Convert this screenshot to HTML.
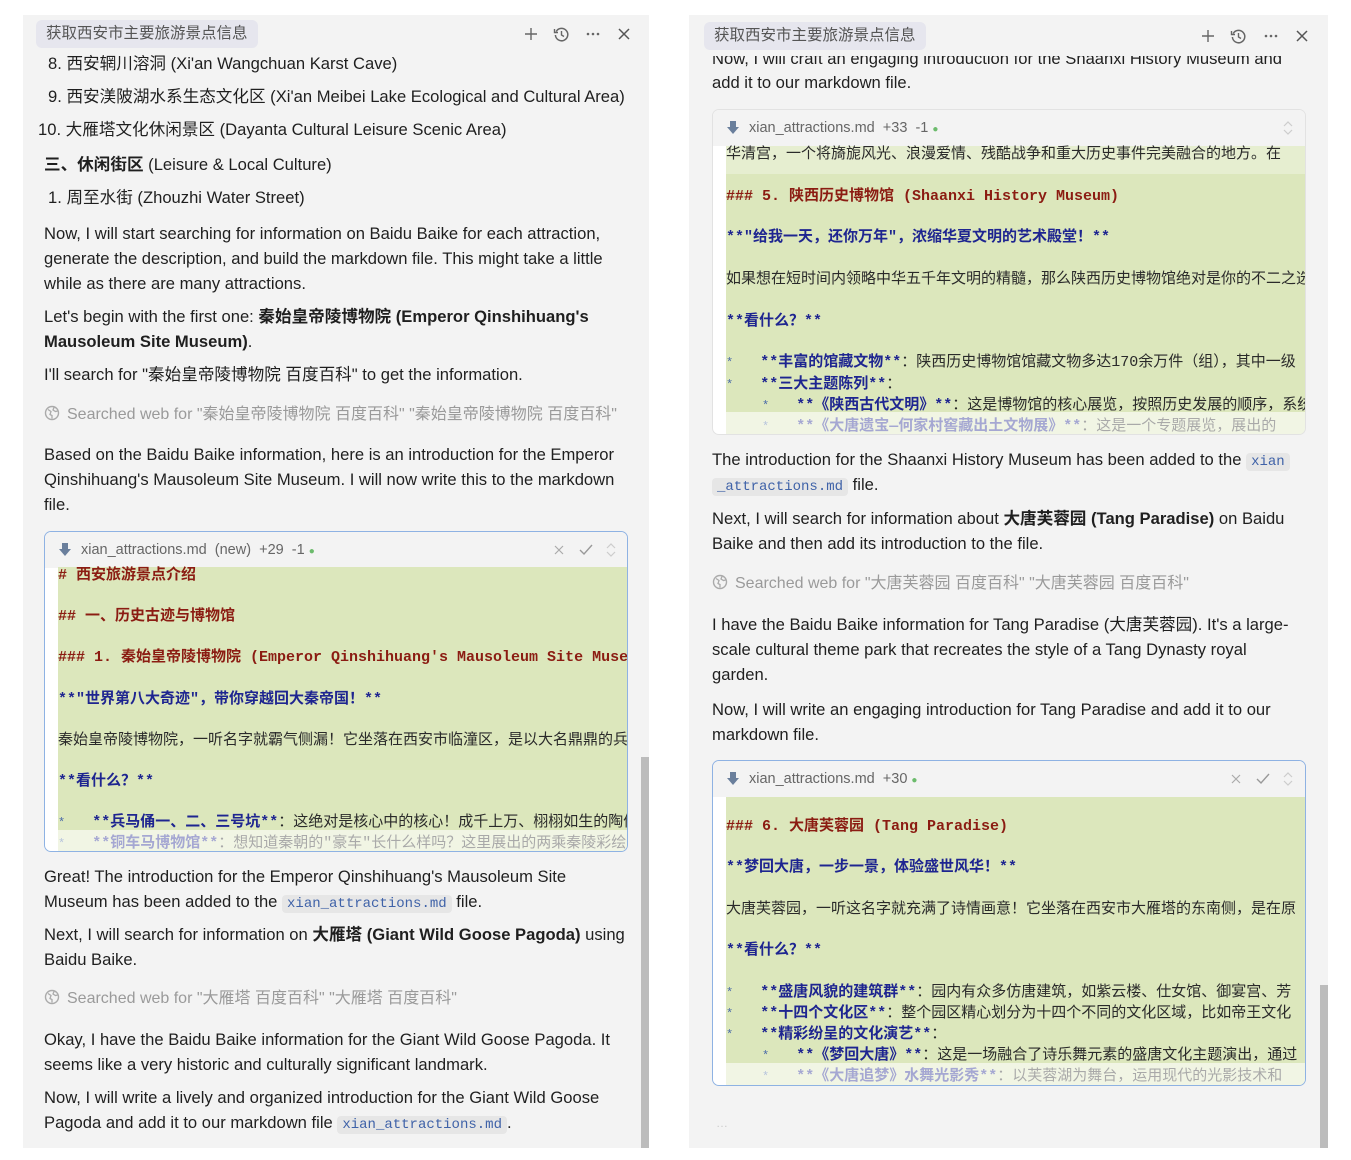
<!DOCTYPE html>
<html><head><meta charset="utf-8"><style>
*{margin:0;padding:0;box-sizing:border-box}
body{width:1351px;height:1160px;background:#fff;position:relative;overflow:hidden;font-family:"Liberation Sans","Noto Sans CJK SC",sans-serif;color:#1f1f1f}
.panel{position:absolute;background:#f3f3f3;overflow:hidden}
.l{position:absolute;white-space:nowrap;font-size:16.6px;line-height:22px}
.b{font-weight:bold}
.g{color:#9a9a9a}
.tag{position:absolute;background:#e6e6ee;border-radius:6px;font-size:15.5px;color:#555;line-height:28px;padding:0 10px;font-family:"Liberation Sans","Noto Sans CJK SC",sans-serif}
.ic{position:absolute;color:#666}
.ic svg{display:block}
code{font-family:"Liberation Mono",monospace;font-size:14px;color:#3f62a8;background:#e6e6e6;padding:1px 5px;border-radius:4px}
.cb{position:absolute;border:1px solid #8eb2e3;border-radius:7px;overflow:hidden;background:#fff}
.cbh{position:absolute;left:0;right:0;top:0;height:36px;background:#f3f3f3;font-size:14.5px;color:#666;line-height:36px}
.gr{position:absolute;background:#dce7bc}
.m{position:absolute;white-space:nowrap;font-family:"Liberation Mono","Noto Sans CJK SC",monospace;font-size:15px;line-height:20px;color:#2a2a2a}
.h{color:#8b1c12;font-weight:bold}
.bl{color:#1e2590;font-weight:bold}
.st{color:#4a6aa8;font-size:12px}
.fade{position:absolute;left:0;right:0;background:rgba(255,255,255,.6)}
.sb{position:absolute;background:#bcbcbc}
</style></head><body>

<!-- LEFT PANEL -->
<div class="panel" style="left:23px;top:15px;width:626px;height:1133px">
  <div class="sb" style="left:618px;top:742px;width:8px;height:391px"></div>
</div>
<div class="tag" style="left:36px;top:20px">获取西安市主要旅游景点信息</div>
<div class="ic" style="left:523px;top:26px"><svg width="16" height="16" viewBox="0 0 16 16"><path d="M8 2v12M2 8h12" stroke="#666" stroke-width="1.4"/></svg></div>
<div class="ic" style="left:553px;top:26px"><svg width="17" height="17" viewBox="0 0 17 17"><path d="M3.2 5.5A6.2 6.2 0 1 1 2.4 9" fill="none" stroke="#666" stroke-width="1.5"/><path d="M1.5 3v3.5H5" fill="none" stroke="#666" stroke-width="1.4"/><path d="M8.5 5v4l2.5 1.5" fill="none" stroke="#666" stroke-width="1.4"/></svg></div>
<div class="ic" style="left:585px;top:26px"><svg width="16" height="16" viewBox="0 0 16 16"><circle cx="3" cy="8" r="1.3" fill="#666"/><circle cx="8" cy="8" r="1.3" fill="#666"/><circle cx="13" cy="8" r="1.3" fill="#666"/></svg></div>
<div class="ic" style="left:616px;top:26px"><svg width="16" height="16" viewBox="0 0 16 16"><path d="M3 3l10 10M13 3L3 13" stroke="#555" stroke-width="1.5"/></svg></div>

<div class="l" style="left:48px;top:53px">8. 西安辋川溶洞 (Xi'an Wangchuan Karst Cave)</div>
<div class="l" style="left:48px;top:86px">9. 西安渼陂湖水系生态文化区 (Xi'an Meibei Lake Ecological and Cultural Area)</div>
<div class="l" style="left:38px;top:119px">10. 大雁塔文化休闲景区 (Dayanta Cultural Leisure Scenic Area)</div>
<div class="l" style="left:44px;top:154px"><span class="b">三、休闲街区</span> (Leisure &amp; Local Culture)</div>
<div class="l" style="left:48px;top:187px">1. 周至水街 (Zhouzhi Water Street)</div>
<div class="l" style="left:44px;top:223px">Now, I will start searching for information on Baidu Baike for each attraction,</div>
<div class="l" style="left:44px;top:248px">generate the description, and build the markdown file. This might take a little</div>
<div class="l" style="left:44px;top:273px">while as there are many attractions.</div>
<div class="l" style="left:44px;top:306px">Let's begin with the first one: <span class="b">秦始皇帝陵博物院 (Emperor Qinshihuang's</span></div>
<div class="l" style="left:44px;top:331px"><span class="b">Mausoleum Site Museum)</span>.</div>
<div class="l" style="left:44px;top:364px">I'll search for "秦始皇帝陵博物院 百度百科" to get the information.</div>
<div class="l g" style="left:44px;top:404px;font-size:16px"><svg width="16" height="16" viewBox="0 0 16 16" style="vertical-align:-2px;margin-right:7px"><circle cx="8" cy="8" r="6.5" fill="none" stroke="#aaa" stroke-width="1.4"/><path d="M4 4.5l3 2-1 3 2 1v3M10 2.5l-1 2.5 2.5 1.5 2-.5" fill="none" stroke="#aaa" stroke-width="1.3"/></svg>Searched web for "秦始皇帝陵博物院 百度百科" "秦始皇帝陵博物院 百度百科"</div>
<div class="l" style="left:44px;top:444px">Based on the Baidu Baike information, here is an introduction for the Emperor</div>
<div class="l" style="left:44px;top:469px">Qinshihuang's Mausoleum Site Museum. I will now write this to the markdown</div>
<div class="l" style="left:44px;top:494px">file.</div>

<div class="cb" style="left:44px;top:531px;width:584px;height:321px">
  <div class="cbh"><svg width="12" height="14" viewBox="0 0 12 14" style="position:absolute;left:14px;top:11px"><path d="M3 0h6v6l3 0-6 7-6-7h3z" fill="#6a7f9c"/></svg><span style="position:absolute;left:36px">xian_attractions.md&nbsp;&nbsp;(new)&nbsp;&nbsp;+29&nbsp;&nbsp;-1 <span style="color:#6cbb6c;font-size:10px">●</span></span>
  <svg width="12" height="12" viewBox="0 0 12 12" style="position:absolute;left:508px;top:12px"><path d="M2 2l8 8M10 2l-8 8" stroke="#aaa" stroke-width="1.2"/></svg>
  <svg width="14" height="12" viewBox="0 0 14 12" style="position:absolute;left:534px;top:12px"><path d="M1 6l4 4 8-9" fill="none" stroke="#999" stroke-width="1.4"/></svg>
  <svg width="10" height="14" viewBox="0 0 10 14" style="position:absolute;left:561px;top:11px"><path d="M1 5l4-4 4 4M1 9l4 4 4-4" fill="none" stroke="#ccc" stroke-width="1.2"/></svg></div>
  <div class="gr" style="left:13px;right:0;top:35px;bottom:0"></div>
  <div class="m h" style="left:13px;top:34px">#&nbsp;西安旅游景点介绍</div>
  <div class="m h" style="left:13px;top:75px">##&nbsp;一、历史古迹与博物馆</div>
  <div class="m h" style="left:13px;top:116px">###&nbsp;1.&nbsp;秦始皇帝陵博物院&nbsp;(Emperor Qinshihuang's Mausoleum Site Museum)</div>
  <div class="m bl" style="left:13px;top:158px">**"世界第八大奇迹"，带你穿越回大秦帝国！**</div>
  <div class="m" style="left:13px;top:199px">秦始皇帝陵博物院，一听名字就霸气侧漏！它坐落在西安市临潼区，是以大名鼎鼎的兵马俑</div>
  <div class="m bl" style="left:13px;top:240px">**看什么？**</div>
  <div class="m" style="left:13px;top:281px"><span class="st">*</span>&nbsp;&nbsp;&nbsp;<span class="bl">**兵马俑一、二、三号坑**</span>：这绝对是核心中的核心！成千上万、栩栩如生的陶俑</div>
  <div class="m" style="left:13px;top:302px"><span class="st">*</span>&nbsp;&nbsp;&nbsp;<span class="bl">**铜车马博物馆**</span>：想知道秦朝的"豪车"长什么样吗？这里展出的两乘秦陵彩绘</div>
  <div class="fade" style="top:298px;bottom:0"></div>
</div>

<div class="l" style="left:44px;top:866px">Great! The introduction for the Emperor Qinshihuang's Mausoleum Site</div>
<div class="l" style="left:44px;top:891px">Museum has been added to the <code>xian_attractions.md</code> file.</div>
<div class="l" style="left:44px;top:924px">Next, I will search for information on <span class="b">大雁塔 (Giant Wild Goose Pagoda)</span> using</div>
<div class="l" style="left:44px;top:949px">Baidu Baike.</div>
<div class="l g" style="left:44px;top:988px;font-size:16px"><svg width="16" height="16" viewBox="0 0 16 16" style="vertical-align:-2px;margin-right:7px"><circle cx="8" cy="8" r="6.5" fill="none" stroke="#aaa" stroke-width="1.4"/><path d="M4 4.5l3 2-1 3 2 1v3M10 2.5l-1 2.5 2.5 1.5 2-.5" fill="none" stroke="#aaa" stroke-width="1.3"/></svg>Searched web for "大雁塔 百度百科" "大雁塔 百度百科"</div>
<div class="l" style="left:44px;top:1029px">Okay, I have the Baidu Baike information for the Giant Wild Goose Pagoda. It</div>
<div class="l" style="left:44px;top:1054px">seems like a very historic and culturally significant landmark.</div>
<div class="l" style="left:44px;top:1087px">Now, I will write a lively and organized introduction for the Giant Wild Goose</div>
<div class="l" style="left:44px;top:1112px">Pagoda and add it to our markdown file <code>xian_attractions.md</code>.</div>

<!-- RIGHT PANEL -->
<div class="panel" style="left:689px;top:15px;width:639px;height:1133px">
  <div class="sb" style="left:631px;top:970px;width:8px;height:163px"></div>
  <div class="l" style="left:23px;top:33px;clip-path:inset(8px 0 0 0)">Now, I will craft an engaging introduction for the Shaanxi History Museum and</div>
</div>
<div class="tag" style="left:704px;top:22px">获取西安市主要旅游景点信息</div>
<div class="ic" style="left:1200px;top:28px"><svg width="16" height="16" viewBox="0 0 16 16"><path d="M8 2v12M2 8h12" stroke="#666" stroke-width="1.4"/></svg></div>
<div class="ic" style="left:1230px;top:28px"><svg width="17" height="17" viewBox="0 0 17 17"><path d="M3.2 5.5A6.2 6.2 0 1 1 2.4 9" fill="none" stroke="#666" stroke-width="1.5"/><path d="M1.5 3v3.5H5" fill="none" stroke="#666" stroke-width="1.4"/><path d="M8.5 5v4l2.5 1.5" fill="none" stroke="#666" stroke-width="1.4"/></svg></div>
<div class="ic" style="left:1263px;top:28px"><svg width="16" height="16" viewBox="0 0 16 16"><circle cx="3" cy="8" r="1.3" fill="#666"/><circle cx="8" cy="8" r="1.3" fill="#666"/><circle cx="13" cy="8" r="1.3" fill="#666"/></svg></div>
<div class="ic" style="left:1294px;top:28px"><svg width="16" height="16" viewBox="0 0 16 16"><path d="M3 3l10 10M13 3L3 13" stroke="#555" stroke-width="1.5"/></svg></div>

<div class="l" style="left:712px;top:72px">add it to our markdown file.</div>

<div class="cb" style="left:712px;top:109px;width:594px;height:326px;border-color:#e2e2e2">
  <div class="cbh"><svg width="12" height="14" viewBox="0 0 12 14" style="position:absolute;left:14px;top:11px"><path d="M3 0h6v6l3 0-6 7-6-7h3z" fill="#6a7f9c"/></svg><span style="position:absolute;left:36px">xian_attractions.md&nbsp;&nbsp;+33&nbsp;&nbsp;-1 <span style="color:#6cbb6c;font-size:10px">●</span></span>
  <svg width="10" height="14" viewBox="0 0 10 14" style="position:absolute;left:570px;top:11px"><path d="M1 5l4-4 4 4M1 9l4 4 4-4" fill="none" stroke="#ccc" stroke-width="1.2"/></svg></div>
  <div class="gr" style="left:13px;right:0;top:36px;height:28px;background:#e6eed0"></div>
  <div class="gr" style="left:13px;right:0;top:64px;bottom:0"></div>
  <div class="m" style="left:13px;top:35px">华清宫，一个将旖旎风光、浪漫爱情、残酷战争和重大历史事件完美融合的地方。在</div>
  <div class="m h" style="left:13px;top:77px">###&nbsp;5.&nbsp;陕西历史博物馆&nbsp;(Shaanxi History Museum)</div>
  <div class="m bl" style="left:13px;top:118px">**"给我一天，还你万年"，浓缩华夏文明的艺术殿堂！**</div>
  <div class="m" style="left:13px;top:160px">如果想在短时间内领略中华五千年文明的精髓，那么陕西历史博物馆绝对是你的不二之选</div>
  <div class="m bl" style="left:13px;top:202px">**看什么？**</div>
  <div class="m" style="left:13px;top:243px"><span class="st">*</span>&nbsp;&nbsp;&nbsp;<span class="bl">**丰富的馆藏文物**</span>：陕西历史博物馆馆藏文物多达170余万件（组），其中一级</div>
  <div class="m" style="left:13px;top:265px"><span class="st">*</span>&nbsp;&nbsp;&nbsp;<span class="bl">**三大主题陈列**</span>：</div>
  <div class="m" style="left:13px;top:286px">&nbsp;&nbsp;&nbsp;&nbsp;<span class="st">*</span>&nbsp;&nbsp;&nbsp;<span class="bl">**《陕西古代文明》**</span>：这是博物馆的核心展览，按照历史发展的顺序，系统</div>
  <div class="m" style="left:13px;top:307px">&nbsp;&nbsp;&nbsp;&nbsp;<span class="st">*</span>&nbsp;&nbsp;&nbsp;<span class="bl">**《大唐遗宝—何家村窖藏出土文物展》**</span>：这是一个专题展览，展出的</div>
  <div class="fade" style="top:302px;bottom:0"></div>
</div>

<div class="l" style="left:712px;top:449px">The introduction for the Shaanxi History Museum has been added to the <code>xian</code></div>
<div class="l" style="left:712px;top:474px"><code>_attractions.md</code> file.</div>
<div class="l" style="left:712px;top:508px">Next, I will search for information about <span class="b">大唐芙蓉园 (Tang Paradise)</span> on Baidu</div>
<div class="l" style="left:712px;top:533px">Baike and then add its introduction to the file.</div>
<div class="l g" style="left:712px;top:573px;font-size:16px"><svg width="16" height="16" viewBox="0 0 16 16" style="vertical-align:-2px;margin-right:7px"><circle cx="8" cy="8" r="6.5" fill="none" stroke="#aaa" stroke-width="1.4"/><path d="M4 4.5l3 2-1 3 2 1v3M10 2.5l-1 2.5 2.5 1.5 2-.5" fill="none" stroke="#aaa" stroke-width="1.3"/></svg>Searched web for "大唐芙蓉园 百度百科" "大唐芙蓉园 百度百科"</div>
<div class="l" style="left:712px;top:614px">I have the Baidu Baike information for Tang Paradise (大唐芙蓉园). It's a large-</div>
<div class="l" style="left:712px;top:639px">scale cultural theme park that recreates the style of a Tang Dynasty royal</div>
<div class="l" style="left:712px;top:664px">garden.</div>
<div class="l" style="left:712px;top:699px">Now, I will write an engaging introduction for Tang Paradise and add it to our</div>
<div class="l" style="left:712px;top:724px">markdown file.</div>

<div class="cb" style="left:712px;top:760px;width:594px;height:326px">
  <div class="cbh"><svg width="12" height="14" viewBox="0 0 12 14" style="position:absolute;left:14px;top:11px"><path d="M3 0h6v6l3 0-6 7-6-7h3z" fill="#6a7f9c"/></svg><span style="position:absolute;left:36px">xian_attractions.md&nbsp;&nbsp;+30 <span style="color:#6cbb6c;font-size:10px">●</span></span>
  <svg width="12" height="12" viewBox="0 0 12 12" style="position:absolute;left:517px;top:12px"><path d="M2 2l8 8M10 2l-8 8" stroke="#aaa" stroke-width="1.2"/></svg>
  <svg width="14" height="12" viewBox="0 0 14 12" style="position:absolute;left:543px;top:12px"><path d="M1 6l4 4 8-9" fill="none" stroke="#999" stroke-width="1.4"/></svg>
  <svg width="10" height="14" viewBox="0 0 10 14" style="position:absolute;left:570px;top:11px"><path d="M1 5l4-4 4 4M1 9l4 4 4-4" fill="none" stroke="#ccc" stroke-width="1.2"/></svg></div>
  <div class="gr" style="left:13px;right:0;top:36px;bottom:0"></div>
  <div class="m h" style="left:13px;top:56px">###&nbsp;6.&nbsp;大唐芙蓉园&nbsp;(Tang Paradise)</div>
  <div class="m bl" style="left:13px;top:97px">**梦回大唐，一步一景，体验盛世风华！**</div>
  <div class="m" style="left:13px;top:139px">大唐芙蓉园，一听这名字就充满了诗情画意！它坐落在西安市大雁塔的东南侧，是在原</div>
  <div class="m bl" style="left:13px;top:180px">**看什么？**</div>
  <div class="m" style="left:13px;top:222px"><span class="st">*</span>&nbsp;&nbsp;&nbsp;<span class="bl">**盛唐风貌的建筑群**</span>：园内有众多仿唐建筑，如紫云楼、仕女馆、御宴宫、芳</div>
  <div class="m" style="left:13px;top:243px"><span class="st">*</span>&nbsp;&nbsp;&nbsp;<span class="bl">**十四个文化区**</span>：整个园区精心划分为十四个不同的文化区域，比如帝王文化</div>
  <div class="m" style="left:13px;top:264px"><span class="st">*</span>&nbsp;&nbsp;&nbsp;<span class="bl">**精彩纷呈的文化演艺**</span>：</div>
  <div class="m" style="left:13px;top:285px">&nbsp;&nbsp;&nbsp;&nbsp;<span class="st">*</span>&nbsp;&nbsp;&nbsp;<span class="bl">**《梦回大唐》**</span>：这是一场融合了诗乐舞元素的盛唐文化主题演出，通过</div>
  <div class="m" style="left:13px;top:306px">&nbsp;&nbsp;&nbsp;&nbsp;<span class="st">*</span>&nbsp;&nbsp;&nbsp;<span class="bl">**《大唐追梦》水舞光影秀**</span>：以芙蓉湖为舞台，运用现代的光影技术和</div>
  <div class="fade" style="top:302px;bottom:0"></div>
</div>

<div class="l" style="left:716px;top:1112px;color:#ccc;font-size:12px">…</div>
</body></html>
